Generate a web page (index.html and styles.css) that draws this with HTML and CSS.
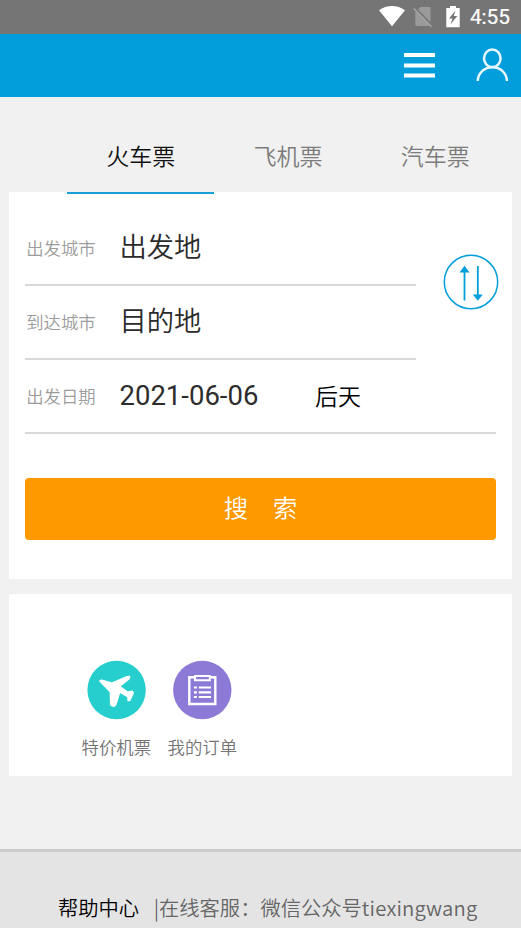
FILE: index.html
```html
<!DOCTYPE html>
<html lang="zh-CN">
<head>
<meta charset="utf-8">
<title>火车票</title>
<link rel="stylesheet" href="styles.css">
</head>
<body>
<div class="status">
  <svg class="wifi" width="26" height="21" viewBox="0 0 26 21"><path d="M0 4.300C7.500-1.400 18.500-1.400 26 4.300L13 20.300z" fill="#fff"/></svg>
  <svg class="sim" width="20" height="22" viewBox="0 0 20 22"><path d="M7.800 1H16.200q1.300 0 1.300 1.300V20H3.600q-1.300 0-1.300-1.300V6z" fill="#9a9a9a"/><path d="M2 1.800L19.300 19.500" stroke="#757575" stroke-width="1.800"/><path d="M.7 2.500L18.500 20.700" stroke="#a2a2a2" stroke-width="1.600"/></svg>
  <svg class="battery" width="14" height="22" viewBox="0 0 14 22"><path d="M4 0h6v2h3.700v19.300H.3V2H4z" fill="#fff"/><path d="M9.500 4.500L3 12.500h3.500L4.500 18.500 11.300 10H7.700z" fill="#757575"/></svg>
  <span class="clock">4:55</span>
</div>
<header class="header">
  <svg class="menu" width="31" height="25" viewBox="0 0 31 25"><path d="M0 2h31M0 12.400h31M0 22.600h31" stroke="#fff" stroke-width="4"/></svg>
  <svg class="user" width="32" height="34" viewBox="0 0 32 34"><g fill="none" stroke="#e8f6fd" stroke-width="2.500"><ellipse cx="16.300" cy="10.300" rx="8.300" ry="8.800"/><path d="M1.700 33C3 14.500 29.700 14.500 31 33"/></g></svg>
</header>
<main class="main">
  <nav class="tabs">
    <a class="tab active">火车票</a><a class="tab">飞机票</a><a class="tab">汽车票</a>
  </nav>
  <section class="card form">
    <div class="cities">
      <div class="fields">
        <div class="row"><span class="label">出发城市</span><span class="value">出发地</span></div>
        <div class="row"><span class="label">到达城市</span><span class="value">目的地</span></div>
      </div>
      <svg class="swap" width="56" height="56" viewBox="0 0 56 56"><g fill="none" stroke="#049edb"><circle cx="28" cy="28" r="26.700" stroke-width="1.500"/><path d="M21.500 17v29.500M34.800 12v30" stroke-width="1.800"/></g><path d="M21.500 11.800l5 6.700h-10zM34.800 46.700l5-6.200h-10z" fill="#049edb"/></svg>
    </div>
    <div class="row date"><span class="label">出发日期</span><span class="value num">2021-06-06</span><span class="day">后天</span></div>
    <button class="search"><span>搜</span><span>索</span></button>
  </section>
  <section class="card links">
    <a class="link">
      <svg width="60" height="60" viewBox="0 0 60 60"><circle cx="30.600" cy="30" r="29.200" fill="#26cfcd"/><path transform="translate(.6)" d="M13.700 21L15 20.600 25.500 23.500 40.500 17 42.600 16.900 42.300 18.300 32.300 26.500 40.700 32.500 45.700 31.700 46.200 33.100 43 40 41.800 40.300 41.700 36.500 32.900 31.500 28.800 44.700 27 46 24.500 44.700 24.100 31.700z" fill="#fff" stroke="#fff" stroke-width="2.200" stroke-linejoin="round"/></svg>
      <span>特价机票</span>
    </a>
    <a class="link">
      <svg width="60" height="60" viewBox="0 0 60 60"><circle cx="30.300" cy="30" r="29.200" fill="#8d7ad6"/><g fill="none" stroke="#fff" transform="translate(.3)"><path d="M22 17.300h-5v26.700h26V17.300h-5" stroke-width="2.400"/><path d="M22.700 16h14.800v4.300H22.700z" stroke-width="2"/><path d="M21.600 27.500h3M21.600 32.300h3M21.600 37h3M26.500 27.500h12.200M26.500 32.300h12.200M26.500 37h12.200" stroke-width="2.200"/></g></svg>
      <span>我的订单</span>
    </a>
  </section>
</main>
<footer class="footer"><a class="help">帮助中心</a><span>|在线客服：微信公众号<span class="account">tiexingwang</span></span></footer>
</body>
</html>
```
FILE: styles.css
```css
* { box-sizing: border-box; }
body {
  margin: 0;
  height: 928px;
  overflow: hidden;
  display: flex;
  flex-direction: column;
  background: #f0f0f0;
  color: #777;
  font-family: "Noto Sans CJK SC DemiLight", "Noto Sans CJK SC", sans-serif;
  font-weight: 350;
}
svg { display: block; flex: none; }
.status {
  height: 34px;
  flex: none;
  display: flex;
  align-items: flex-start;
  justify-content: flex-end;
  padding: 6px 11px 0 0;
  background: #757575;
}
.sim { margin-left: 8px; }
.battery { margin-left: 13px; }
.clock {
  margin-left: 10px;
  font: 400 20.800px/22px Roboto, sans-serif;
  color: #fff;
  -webkit-text-stroke: .2px #fff;
}
.header {
  height: 62.500px;
  flex: none;
  display: flex;
  align-items: flex-start;
  justify-content: flex-end;
  padding: 14px 13px 0 0;
  background: #029edb;
}
.menu { margin: 5px 41px 0 0; }
.main { padding: 22.500px 9px 0; flex: 1; }
.tabs {
  height: 73px;
  display: flex;
  padding-left: 58px;
  background: #f1f1f1;
}
.tab {
  width: 147.300px;
  height: 75px;
  flex: none;
  padding-top: 19px;
  text-align: center;
  font-size: 23px;
  line-height: 34px;
  color: #7c7c7c;
}
.tab.active { color: #111; border-bottom: 2px solid #1a9fd7; }
.card { background: #fff; }
.form { height: 387px; padding: 20px 16px 0; }
.cities { display: flex; justify-content: space-between; }
.fields { width: 391px; }
.row {
  height: 74px;
  display: flex;
  align-items: center;
  border-bottom: 2px solid #d9d9d9;
}
.label {
  width: 94.500px;
  padding: 0 0 0 1.200px;
  font-size: 17.400px;
  line-height: 26px;
  color: #9c9c9c;
}
.value { font-size: 27.300px; line-height: 40px; color: #2b2b2b; margin-top: -6px; }
.num { font-family: Roboto, sans-serif; font-weight: 400; font-size: 27.500px; color: #2d2d2d; margin-top: -1px; width: 195.500px; }
.day { font-size: 23px; line-height: 34px; color: #000; margin-top: -2px; }
.swap { margin: 42px -3px 0 0; }
.search {
  width: 100%;
  height: 62px;
  margin-top: 43.600px;
  padding: 0 0 4px;
  display: flex;
  justify-content: center;
  align-items: center;
  gap: 25px;
  border: 0;
  border-radius: 4px;
  background: #ff9900;
  color: #fff;
  font: inherit;
  font-size: 24.300px;
  line-height: 36px;
}
.links {
  height: 182px;
  margin-top: 15px;
  display: flex;
  padding: 66px 0 0 64.300px;
}
.link {
  width: 86px;
  display: flex;
  flex-direction: column;
  align-items: center;
  font-size: 17.400px;
  line-height: 26px;
  gap: 14px;
  color: #757575;
}
.footer {
  height: 79px;
  flex: none;
  display: flex;
  align-items: flex-start;
  padding: 40px 0 0 58px;
  border-top: 3px solid #cbcbcb;
  background: #e4e4e4;
  color: #666;
  font-size: 20.300px;
  line-height: 30px;
  white-space: nowrap;
}
.help { color: #000; margin-right: 14.500px; }
.account { letter-spacing: .2px; }
```
